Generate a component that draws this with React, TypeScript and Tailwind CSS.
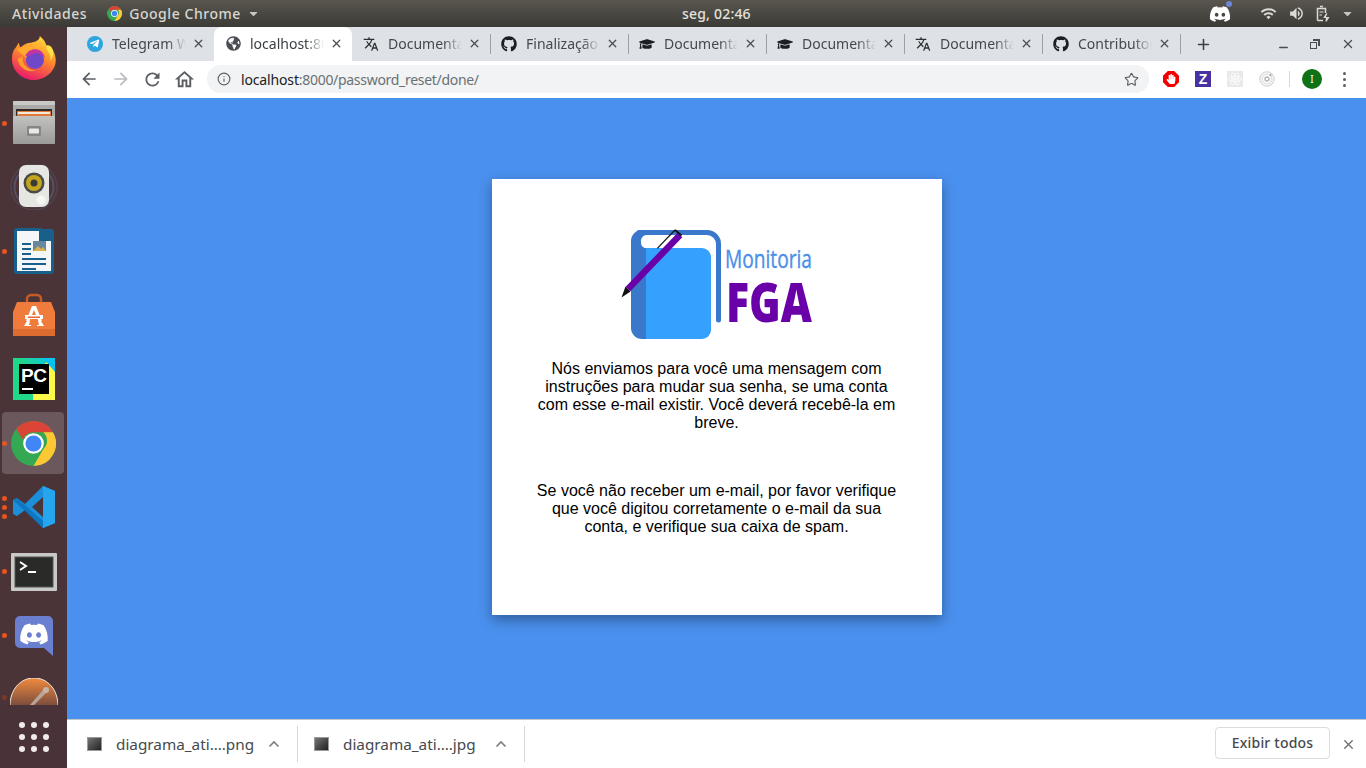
import type { ReactNode } from 'react';
import { Info, Minus, Plus, Star, X } from 'lucide-react';
import { FaCaretDown, FaDiscord, FaGithub, FaGlobeAmericas, FaGraduationCap, FaHandPaper, FaTelegramPlane } from 'react-icons/fa';
import { MdArrowBack, MdArrowForward, MdOutlineHome, MdRefresh, MdTranslate, MdVolumeUp, MdWifi } from 'react-icons/md';

const UI_FONT = "font-['Noto_Sans',sans-serif]";

function ChromeLogo({ size = 16 }: { size?: number }) {
  return (
    <svg width={size} height={size} viewBox="0 0 48 48">
      <circle cx="24" cy="24" r="24" fill="#34a853" />
      <path d="M24 0a24 24 0 0 1 20.8 12H24a12 12 0 0 0-11.2 7.6L5.600 8.600A24 24 0 0 1 24 0z" fill="#db4437" />
      <path d="M44.800 12A24 24 0 0 1 24 48l10.400-18a12 12 0 0 0 0-18z" fill="#fcc934" />
      <circle cx="24" cy="24" r="11" fill="#fff" />
      <circle cx="24" cy="24" r="8.600" fill="#4285f4" />
    </svg>
  );
}

function Firefox() {
  return (
    <svg width="46" height="46" viewBox="0 0 48 48" className="-mt-[2px]">
      <defs>
        <linearGradient id="ffa" x1="0.7" y1="0" x2="0.3" y2="1">
          <stop offset="0" stopColor="#ffdf3a" />
          <stop offset="0.45" stopColor="#ff8a2b" />
          <stop offset="1" stopColor="#e8146e" />
        </linearGradient>
      </defs>
      <path d="M30 1c5 4 6 7 7 10 2-1 4 0 5 2 5 7 6 15 3 21-4 8-12 13-21 13C11 47 1 37 1 25c0-5 1-9 4-12l3-5c1 2 1 4 2 5 3-3 7-5 11-5 4-1 9-2 9-7z" fill="url(#ffa)" />
      <path d="M30 1c5 4 8 9 7 14 3 3 5 7 4 12 3-4 4-9 2-13-1-2-3-3-6-3-1-4-3-7-7-10z" fill="#ffe14a" />
      <path d="M6 15c6-4 13-4 18-1 4 2 7 5 8 9l-12 2c-4-1-8-4-14-10z" fill="#ffa92e" />
      <circle cx="25" cy="26" r="9.500" fill="#6f48c9" />
      <path d="M15 22c2-6 9-9 15-6 3 2 5 5 5 8-4-5-8-6-12-4-3 1-5 2-8 2z" fill="#c034a4" />
      <path d="M12 22c-1 8 5 15 14 15-9 3-18-3-19-12z" fill="#ff9d2e" />
    </svg>
  );
}

function FilesIcon() {
  return (
    <svg width="42" height="44" viewBox="0 0 42 44">
      <defs>
        <linearGradient id="fla" x1="0" y1="0" x2="0" y2="1">
          <stop offset="0" stopColor="#c2c2c0" />
          <stop offset="1" stopColor="#9a9a98" />
        </linearGradient>
      </defs>
      <rect x="0" y="0" width="42" height="43" rx="2" fill="#a9a9a7" />
      <rect x="0" y="0" width="42" height="4" rx="1" fill="#c8c8c6" />
      <rect x="3" y="8" width="36" height="11" fill="#2f2b28" />
      <rect x="4" y="10" width="34" height="7" fill="#e07a3a" />
      <rect x="5" y="11" width="32" height="2" fill="#f4e8d8" />
      <rect x="0" y="15" width="42" height="28" rx="1" fill="url(#fla)" />
      <rect x="14" y="25" width="14" height="10" rx="1" fill="#868684" />
      <rect x="16" y="27.500" width="10" height="5" rx="1" fill="#e8e8e6" />
    </svg>
  );
}

function SpeakerIcon() {
  return (
    <svg width="50" height="46" viewBox="0 0 50 46">
      <circle cx="25" cy="23" r="23" fill="none" stroke="#5e5f78" strokeWidth="1.500" opacity="0.35" />
      <circle cx="25" cy="23" r="19.500" fill="none" stroke="#5e6e90" strokeWidth="2" opacity="0.5" />
      <rect x="10" y="1" width="30" height="42" rx="7" fill="#e6e6e2" />
      <circle cx="25" cy="19" r="10.500" fill="#4a4a46" />
      <circle cx="25" cy="19" r="8" fill="#c2a61e" />
      <circle cx="25" cy="19" r="3.500" fill="#3a3a36" />
      <circle cx="32" cy="36" r="4.500" fill="#f5f5f2" />
    </svg>
  );
}

function WriterIcon() {
  return (
    <svg width="40" height="46" viewBox="0 0 40 46">
      <path d="M3 0h24l13 12v30a4 4 0 0 1-4 4H3a3 3 0 0 1-3-3V3a3 3 0 0 1 3-3z" fill="#18608c" />
      <path d="M3 3h22v10h12v30H3z" fill="#f4f6f8" />
      <path d="M28 1h10a2 2 0 0 1 2 2v9z" fill="#18608c" />
      <rect x="8" y="15" width="9" height="2" fill="#18608c" />
      <rect x="8" y="20" width="9" height="2" fill="#18608c" />
      <rect x="8" y="25" width="9" height="2" fill="#18608c" />
      <rect x="19" y="13" width="13" height="10" fill="#6a87a0" />
      <path d="M19 23l5-5 3 3 2-2 3 4z" fill="#d9b24a" />
      <rect x="8" y="30" width="24" height="2" fill="#18608c" />
      <rect x="8" y="35" width="24" height="2" fill="#18608c" />
      <rect x="8" y="40" width="14" height="2" fill="#18608c" />
    </svg>
  );
}

function StoreIcon() {
  return (
    <svg width="42" height="44" viewBox="0 0 42 44">
      <path d="M14 14V6a4 4 0 0 1 4-4h6a4 4 0 0 1 4 4v8" fill="none" stroke="#c95a25" strokeWidth="2.500" />
      <path d="M4 9h34l4 10v23a1 1 0 0 1-1 1H1a1 1 0 0 1-1-1V19z" fill="#ef7b3c" />
      <path d="M0 36h42v6a1 1 0 0 1-1 1H1a1 1 0 0 1-1-1z" fill="#dc6c30" />
      <path d="M19 13h4l6 15h-3.500l-4.500-11-4.500 11H13z" fill="#fff" />
      <path d="M12 22h18v4H12z" fill="#fff" />
      <path d="M15 23.500h12v1.500H15z" fill="#e8672c" />
      <path d="M11 33h7v-1h-2l1-4h-3zM24 33h7l-3-5h-3l1 4h-2z" fill="#fff" />
    </svg>
  );
}

function PyCharmIcon() {
  return (
    <svg width="42" height="42" viewBox="0 0 42 42">
      <defs>
        <linearGradient id="pca" x1="0" y1="1" x2="1" y2="0">
          <stop offset="0" stopColor="#21d789" />
          <stop offset="0.55" stopColor="#21d789" />
          <stop offset="1" stopColor="#07c3f2" />
        </linearGradient>
      </defs>
      <rect width="42" height="42" fill="url(#pca)" />
      <path d="M20 42H42V12l-8-8-14 12z" fill="#fcf84a" />
      <path d="M30 0h12v14z" fill="#07c3f2" />
      <rect x="6" y="6" width="30" height="30" fill="#000" />
      <text x="8" y="24" fontFamily="'Liberation Sans',sans-serif" fontWeight="700" fontSize="19" fill="#fff" textLength="26">PC</text>
      <rect x="9" y="30" width="11" height="2" fill="#fff" />
    </svg>
  );
}

function VsCodeIcon() {
  return (
    <svg width="42" height="42" viewBox="0 0 42 42">
      <path d="M30 0l12 5v32l-12 5L12 24l-8 6-4-2V14l4-2 8 6zM30 11L19 21l11 10z" fill="#1b8fdc" />
      <path d="M30 0l12 5v32l-12 5z" fill="#27a6f0" />
      <path d="M0 14l4-2 26 23v7L0 14z" fill="#0b6fb8" opacity="0.75" />
    </svg>
  );
}

function TerminalIcon() {
  return (
    <svg width="46" height="38" viewBox="0 0 46 38" className="mt-[2px]">
      <rect width="46" height="38" rx="1" fill="#c9c9c7" />
      <rect x="4" y="4" width="38" height="30" fill="#2a2a28" stroke="#55554f" />
      <path d="M9 9l6 4-6 4" fill="none" stroke="#fff" strokeWidth="2" />
      <rect x="17" y="18" width="8" height="2" fill="#fff" />
    </svg>
  );
}

function DiscordTile() {
  return (
    <svg width="38" height="40" viewBox="0 0 38 40" className="mt-[2px]">
      <path d="M5 0h28a5 5 0 0 1 5 5v35l-9-8H5a5 5 0 0 1-5-5V5a5 5 0 0 1 5-5z" fill="#6a7fd0" />
      <foreignObject x="4" y="3" width="30" height="30">
        <FaDiscord size={30} color="#fff" />
      </foreignObject>
    </svg>
  );
}

function ScriptIcon() {
  return (
    <svg width="48" height="28" viewBox="0 0 48 28">
      <defs>
        <linearGradient id="sca" x1="0" y1="0" x2="0" y2="1">
          <stop offset="0" stopColor="#f08a3e" />
          <stop offset="1" stopColor="#7a4c3e" />
        </linearGradient>
      </defs>
      <path d="M0 28C0 12 10 0 24 0s24 12 24 28z" fill="url(#sca)" stroke="#f3e9e0" strokeWidth="1" />
      <path d="M20 27l14-16 3 3-13 13z" fill="#b8a49a" />
      <circle cx="36" cy="12" r="3" fill="#c9b2a5" />
    </svg>
  );
}

function BatteryTray() {
  return (
    <svg width="14" height="17" viewBox="0 0 14 17" fill="none" stroke="#dcdad4" strokeWidth="1.500">
      <path d="M4 1.500h3M1.500 15.500v-12h8V8M1.500 15.500H7" />
      <path d="M3.500 7h4M3.500 10h2.500" strokeWidth="1.200" />
      <path d="M10.500 8l-3 4.500h5l-3 4" stroke="none" fill="#dcdad4" />
      <path d="M11 8.500L8.500 12.500h4L10 16.500" strokeWidth="1.200" />
    </svg>
  );
}

const dockItems: { icon: ReactNode; dots: number; active?: boolean }[] = [
  { icon: <Firefox />, dots: 0 },
  { icon: <FilesIcon />, dots: 1 },
  { icon: <SpeakerIcon />, dots: 0 },
  { icon: <WriterIcon />, dots: 1 },
  { icon: <StoreIcon />, dots: 0 },
  { icon: <PyCharmIcon />, dots: 0 },
  { icon: <ChromeLogo size={45} />, dots: 1, active: true },
  { icon: <VsCodeIcon />, dots: 3 },
  { icon: <TerminalIcon />, dots: 1 },
  { icon: <DiscordTile />, dots: 1 },
];

function DockItem({ icon, dots, active }: { icon: ReactNode; dots: number; active?: boolean }) {
  return (
    <div className="relative flex h-[64px] w-full shrink-0 items-center justify-center">
      {active && <div className="absolute left-[2px] top-[1px] h-[62px] w-[62px] rounded-[4px] bg-[#6a585c]" />}
      <div className="absolute left-[2px] top-0 flex h-full w-[5px] flex-col items-center justify-center gap-[4px]">
        {Array.from({ length: dots }).map((_, i) => (
          <span key={i} className="h-[5px] w-[5px] rounded-full bg-[#e95420]" />
        ))}
      </div>
      <div className="relative flex items-center justify-center">{icon}</div>
    </div>
  );
}

function Dock() {
  return (
    <aside className="flex h-[741px] w-[67px] shrink-0 flex-col overflow-hidden bg-[#4b3438]">
      <div className="flex h-[678px] flex-col overflow-hidden">
        {dockItems.map((item, i) => (
          <DockItem key={i} {...item} />
        ))}
        <div className="relative flex h-[38px] shrink-0 items-start justify-center pt-[11px]">
          <div className="absolute left-[2px] top-[28px] h-[5px] w-[5px] rounded-full bg-[#7a3a28]" />
          <ScriptIcon />
        </div>
      </div>
      <div className="flex flex-1 items-center justify-center bg-[#45303a]/40 pt-[1px]">
        <div className="grid grid-cols-3 gap-x-[6px] gap-y-[6px]">
          {Array.from({ length: 9 }).map((_, i) => (
            <span key={i} className="h-[6px] w-[6px] rounded-full bg-[#f0eced]" />
          ))}
        </div>
      </div>
    </aside>
  );
}

function TopBar() {
  return (
    <header className={`flex h-[27px] items-center bg-gradient-to-b from-[#59564f] to-[#3b3a36] pl-[12px] pr-[12px] text-[14px] font-medium tracking-[0.55px] text-[#d8d6d0] ${UI_FONT}`}>
      <div className="flex w-[670px] items-center">
        <span>Atividades</span>
        <span className="ml-[20px] flex items-center gap-[7px]">
          <ChromeLogo size={15} />
          Google Chrome
          <FaCaretDown size={13} className="-ml-[1px] text-[#c8c6c0]" />
        </span>
      </div>
      <span className="tracking-[0.2px] text-[#e4e2dc]">seg, 02:46</span>
      <div className="flex flex-1 items-center justify-end text-[#dcdad4]">
        <span className="relative mr-[29px]">
          <FaDiscord size={22} color="#fff" />
          <span className="absolute -right-[1px] -top-[2px] h-[6px] w-[6px] rounded-full bg-[#6f86d6]" />
        </span>
        <MdWifi size={17} className="mr-[11px]" />
        <MdVolumeUp size={17} className="mr-[11px]" />
        <BatteryTray />
        <FaCaretDown size={13} className="ml-[11px] text-[#c8c6c0]" />
      </div>
    </header>
  );
}

const tabs: { title: string; icon: ReactNode; active?: boolean }[] = [
  { title: 'Telegram Web', icon: <span className="flex h-[16px] w-[16px] items-center justify-center rounded-full bg-[#2ca5e0] pr-[1px]"><FaTelegramPlane size={11} color="#fff" /></span> },
  { title: 'localhost:8000/pass', icon: <FaGlobeAmericas size={15} color="#4a4d52" />, active: true },
  { title: 'Documentation', icon: <MdTranslate size={18} color="#2f3033" /> },
  { title: 'Finalização de', icon: <FaGithub size={16} color="#1b1f23" /> },
  { title: 'Documentation', icon: <FaGraduationCap size={16} color="#1b1f23" /> },
  { title: 'Documentation', icon: <FaGraduationCap size={16} color="#1b1f23" /> },
  { title: 'Documentation', icon: <MdTranslate size={18} color="#2f3033" /> },
  { title: 'Contributors', icon: <FaGithub size={16} color="#1b1f23" /> },
];

function Tab({ title, icon, active, showDivider }: { title: string; icon: ReactNode; active?: boolean; showDivider: boolean }) {
  return (
    <div className={`relative flex h-[34px] w-[138px] shrink-0 items-center pb-[1px] pl-[11px] pr-[9px] ${active ? 'rounded-t-[8px] bg-white text-[#3c4043]' : 'text-[#45494e]'}`}>
      <span className="flex w-[16px] shrink-0 items-center justify-center">{icon}</span>
      <span className="ml-[9px] min-w-0 flex-1 overflow-hidden whitespace-nowrap text-[14px] [mask-image:linear-gradient(to_right,black_75%,transparent)]">{title}</span>
      <X size={13} strokeWidth={2.400} className="ml-[6px] shrink-0 text-[#4a4d52]" />
      {showDivider && <span className="absolute -right-[1px] top-[7px] h-[20px] w-px bg-[#9aa0a6]" />}
    </div>
  );
}

function TabStrip() {
  return (
    <div className={`flex h-[34px] items-center bg-[#dee1e6] pl-[9px] ${UI_FONT}`}>
      {tabs.map((t, i) => (
        <Tab key={i} {...t} showDivider={!t.active && !tabs[i + 1]?.active && i > 0} />
      ))}
      <Plus size={17} strokeWidth={2.200} className="ml-[15px] text-[#3c4043]" />
      <div className="ml-auto flex items-center pr-[11px] text-[#4a4d52]">
        <Minus size={13} strokeWidth={2.400} className="mt-[6px]" />
        <span className="relative ml-[20px] block h-[10px] w-[10px]">
          <span className="absolute bottom-0 left-0 h-[7px] w-[7px] border-[1.500px] border-[#4a4d52]" />
          <span className="absolute right-0 top-0 h-[7px] w-[7px] border-t-[2px] border-r-[2px] border-[#4a4d52]" />
        </span>
        <X size={14} strokeWidth={2.200} className="ml-[21px]" />
      </div>
    </div>
  );
}

function ReactExt() {
  return (
    <span className="flex h-[16px] w-[16px] items-center justify-center bg-[#e9e9e9]">
      <svg width="14" height="14" viewBox="0 0 24 24" fill="none" stroke="#fbfbfb" strokeWidth="1.600">
        <ellipse cx="12" cy="12" rx="11" ry="4.500" />
        <ellipse cx="12" cy="12" rx="11" ry="4.500" transform="rotate(60 12 12)" />
        <ellipse cx="12" cy="12" rx="11" ry="4.500" transform="rotate(120 12 12)" />
        <circle cx="12" cy="12" r="2" fill="#fbfbfb" />
      </svg>
    </span>
  );
}

function RadarExt() {
  return (
    <svg width="16" height="16" viewBox="0 0 16 16" fill="none" stroke="#c9c9c9">
      <circle cx="8" cy="8" r="7.200" />
      <circle cx="8" cy="8" r="5" stroke="#e2e2e2" strokeWidth="1.600" />
      <circle cx="8" cy="8" r="2" stroke="#b5b5b5" strokeWidth="1.400" />
      <circle cx="11.500" cy="4" r="1" fill="#999" stroke="none" />
    </svg>
  );
}

function Toolbar() {
  return (
    <div className={`flex h-[37px] items-start bg-white pl-[12px] pr-[17px] pt-[4px] ${UI_FONT}`}>
      <div className="flex h-[28px] items-center text-[#5a5e63]">
        <MdArrowBack size={20} />
        <MdArrowForward size={20} className="ml-[12px] text-[#b8bbbf]" />
        <MdRefresh size={21} className="ml-[11px]" />
        <MdOutlineHome size={23} className="ml-[10px]" />
      </div>
      <div className="ml-[11px] flex h-[28px] w-[942px] items-center rounded-full bg-[#f1f3f4] pl-[10px] pr-[10px] text-[14px]">
        <Info size={14} strokeWidth={2} className="text-[#5f6368]" />
        <span className="ml-[10px] tracking-[-0.15px] text-[#202124]">localhost</span>
        <span className="tracking-[-0.3px] text-[#6b7075]">:8000/password_reset/done/</span>
        <Star size={15} strokeWidth={1.800} className="ml-auto text-[#5a5e63]" />
      </div>
      <div className="flex h-[28px] flex-1 items-center pl-[14px]">
        <span className="flex h-[16px] w-[16px] items-center justify-center bg-[#f00000] [clip-path:polygon(30%_0,70%_0,100%_30%,100%_70%,70%_100%,30%_100%,0_70%,0_30%)]">
          <FaHandPaper size={10} color="#fff" />
        </span>
        <span className="ml-[16px] flex h-[16px] w-[16px] items-center justify-center bg-[#4632a0] font-['Liberation_Sans',sans-serif] text-[14px] font-bold leading-none text-white">Z</span>
        <span className="ml-[16px]">
          <ReactExt />
        </span>
        <span className="ml-[16px]">
          <RadarExt />
        </span>
        <span className="ml-[14px] h-[16px] w-px bg-[#d4d6d9]" />
        <span className="ml-[12px] flex h-[20px] w-[20px] items-center justify-center rounded-full bg-[#0f7214] text-[10px] text-white">I</span>
        <span className="ml-[21px] flex flex-col gap-[3px]">
          <span className="h-[3px] w-[3px] rounded-full bg-[#5a5e63]" />
          <span className="h-[3px] w-[3px] rounded-full bg-[#5a5e63]" />
          <span className="h-[3px] w-[3px] rounded-full bg-[#5a5e63]" />
        </span>
      </div>
    </div>
  );
}

function MonitoriaLogo() {
  return (
    <svg width="200" height="120" viewBox="0 0 200 120" className="block">
      <path d="M24 6.500H92a11.500 11.500 0 0 1 11.500 11.500V94" fill="none" stroke="#3a78cb" strokeWidth="5" strokeLinecap="round" />
      <path d="M27 4A11 11 0 0 0 16 15V102A11 11 0 0 0 27 113H31V22H30A6 6 0 0 1 26 16A6 6 0 0 1 31 9V4z" fill="#3a78cb" />
      <path d="M31 22H87a9 9 0 0 1 9 9V104a9 9 0 0 1-9 9H31z" fill="#36a0fe" />
      <path d="M13 63L65 9" stroke="#6a00a8" strokeWidth="6.500" />
      <path d="M10.500 60.500L15.500 65.500L6.500 71.500z" fill="#111" />
      <path d="M60 4L66.500 9.500" stroke="#111" strokeWidth="1.800" />
      <path d="M42.300 22.300L60 4" stroke="#111" strokeWidth="1.200" />
      <text x="110" y="42" fontFamily="'Open Sans',sans-serif" fontSize="25" fill="#4c8fe8" stroke="#4c8fe8" strokeWidth="0.400" textLength="87" lengthAdjust="spacingAndGlyphs">Monitoria</text>
      <text x="111" y="96" fontFamily="'Open Sans',sans-serif" fontWeight="800" fontSize="54" fill="#6a00a8" textLength="86" lengthAdjust="spacingAndGlyphs">FGA</text>
    </svg>
  );
}

function ResetCard() {
  return (
    <div className="flex h-[436px] w-[450px] flex-col items-center bg-white px-[40px] pt-[47px] text-center font-['Liberation_Sans',sans-serif] text-[16px] leading-[18px] text-black shadow-[0_5px_12px_rgba(0,0,0,0.35)]">
      <div className="ml-[-4px]">
        <MonitoriaLogo />
      </div>
      <p className="mt-[14px]">Nós enviamos para você uma mensagem com instruções para mudar sua senha, se uma conta com esse e-mail existir. Você deverá recebê-la em breve.</p>
      <p className="mt-[50px]">Se você não receber um e-mail, por favor verifique que você digitou corretamente o e-mail da sua conta, e verifique sua caixa de spam.</p>
    </div>
  );
}

function DownloadItem({ name, wide }: { name: string; wide?: boolean }) {
  return (
    <div className={`flex h-[36px] shrink-0 items-center border-r border-[#d4d6d9] text-[15.300px] text-[#45494e] ${wide ? 'w-[231px] pl-[20px]' : 'w-[227px] pl-[16px]'}`}>
      <span className="h-[14px] w-[15px] border border-[#9a9a9a] bg-gradient-to-br from-[#777] to-[#222]" />
      <span className="ml-[14px]">{name}</span>
      <svg width="12" height="8" viewBox="0 0 12 8" className="ml-auto mr-[17px]" fill="none" stroke="#7a7d82" strokeWidth="1.600">
        <path d="M1.500 6.500L6 2l4.500 4.500" />
      </svg>
    </div>
  );
}

function DownloadBar() {
  return (
    <footer className={`flex h-[49px] items-center border-t border-[#c4c6c9] bg-white pr-[10px] ${UI_FONT}`}>
      <DownloadItem name="diagrama_ati….png" wide />
      <DownloadItem name="diagrama_ati….jpg" />
      <button className="ml-auto -mt-[2px] flex h-[32px] w-[115px] items-center justify-center rounded-[4px] border border-[#dadce0] pb-[1px] text-[14px] font-medium tracking-[0.2px] text-[#45494e]">Exibir todos</button>
      <X size={15} strokeWidth={2.200} className="ml-[11px] text-[#6b6f74]" />
    </footer>
  );
}

export default function App() {
  return (
    <div className="flex h-[768px] w-[1366px] flex-col overflow-hidden bg-[#4b3438]">
      <TopBar />
      <div className="flex min-h-0 flex-1">
        <Dock />
        <div className="flex min-w-0 flex-1 flex-col">
          <TabStrip />
          <Toolbar />
          <main className="flex flex-1 justify-center bg-[#4a90ee] pt-[81px]">
            <ResetCard />
          </main>
          <DownloadBar />
        </div>
      </div>
    </div>
  );
}
